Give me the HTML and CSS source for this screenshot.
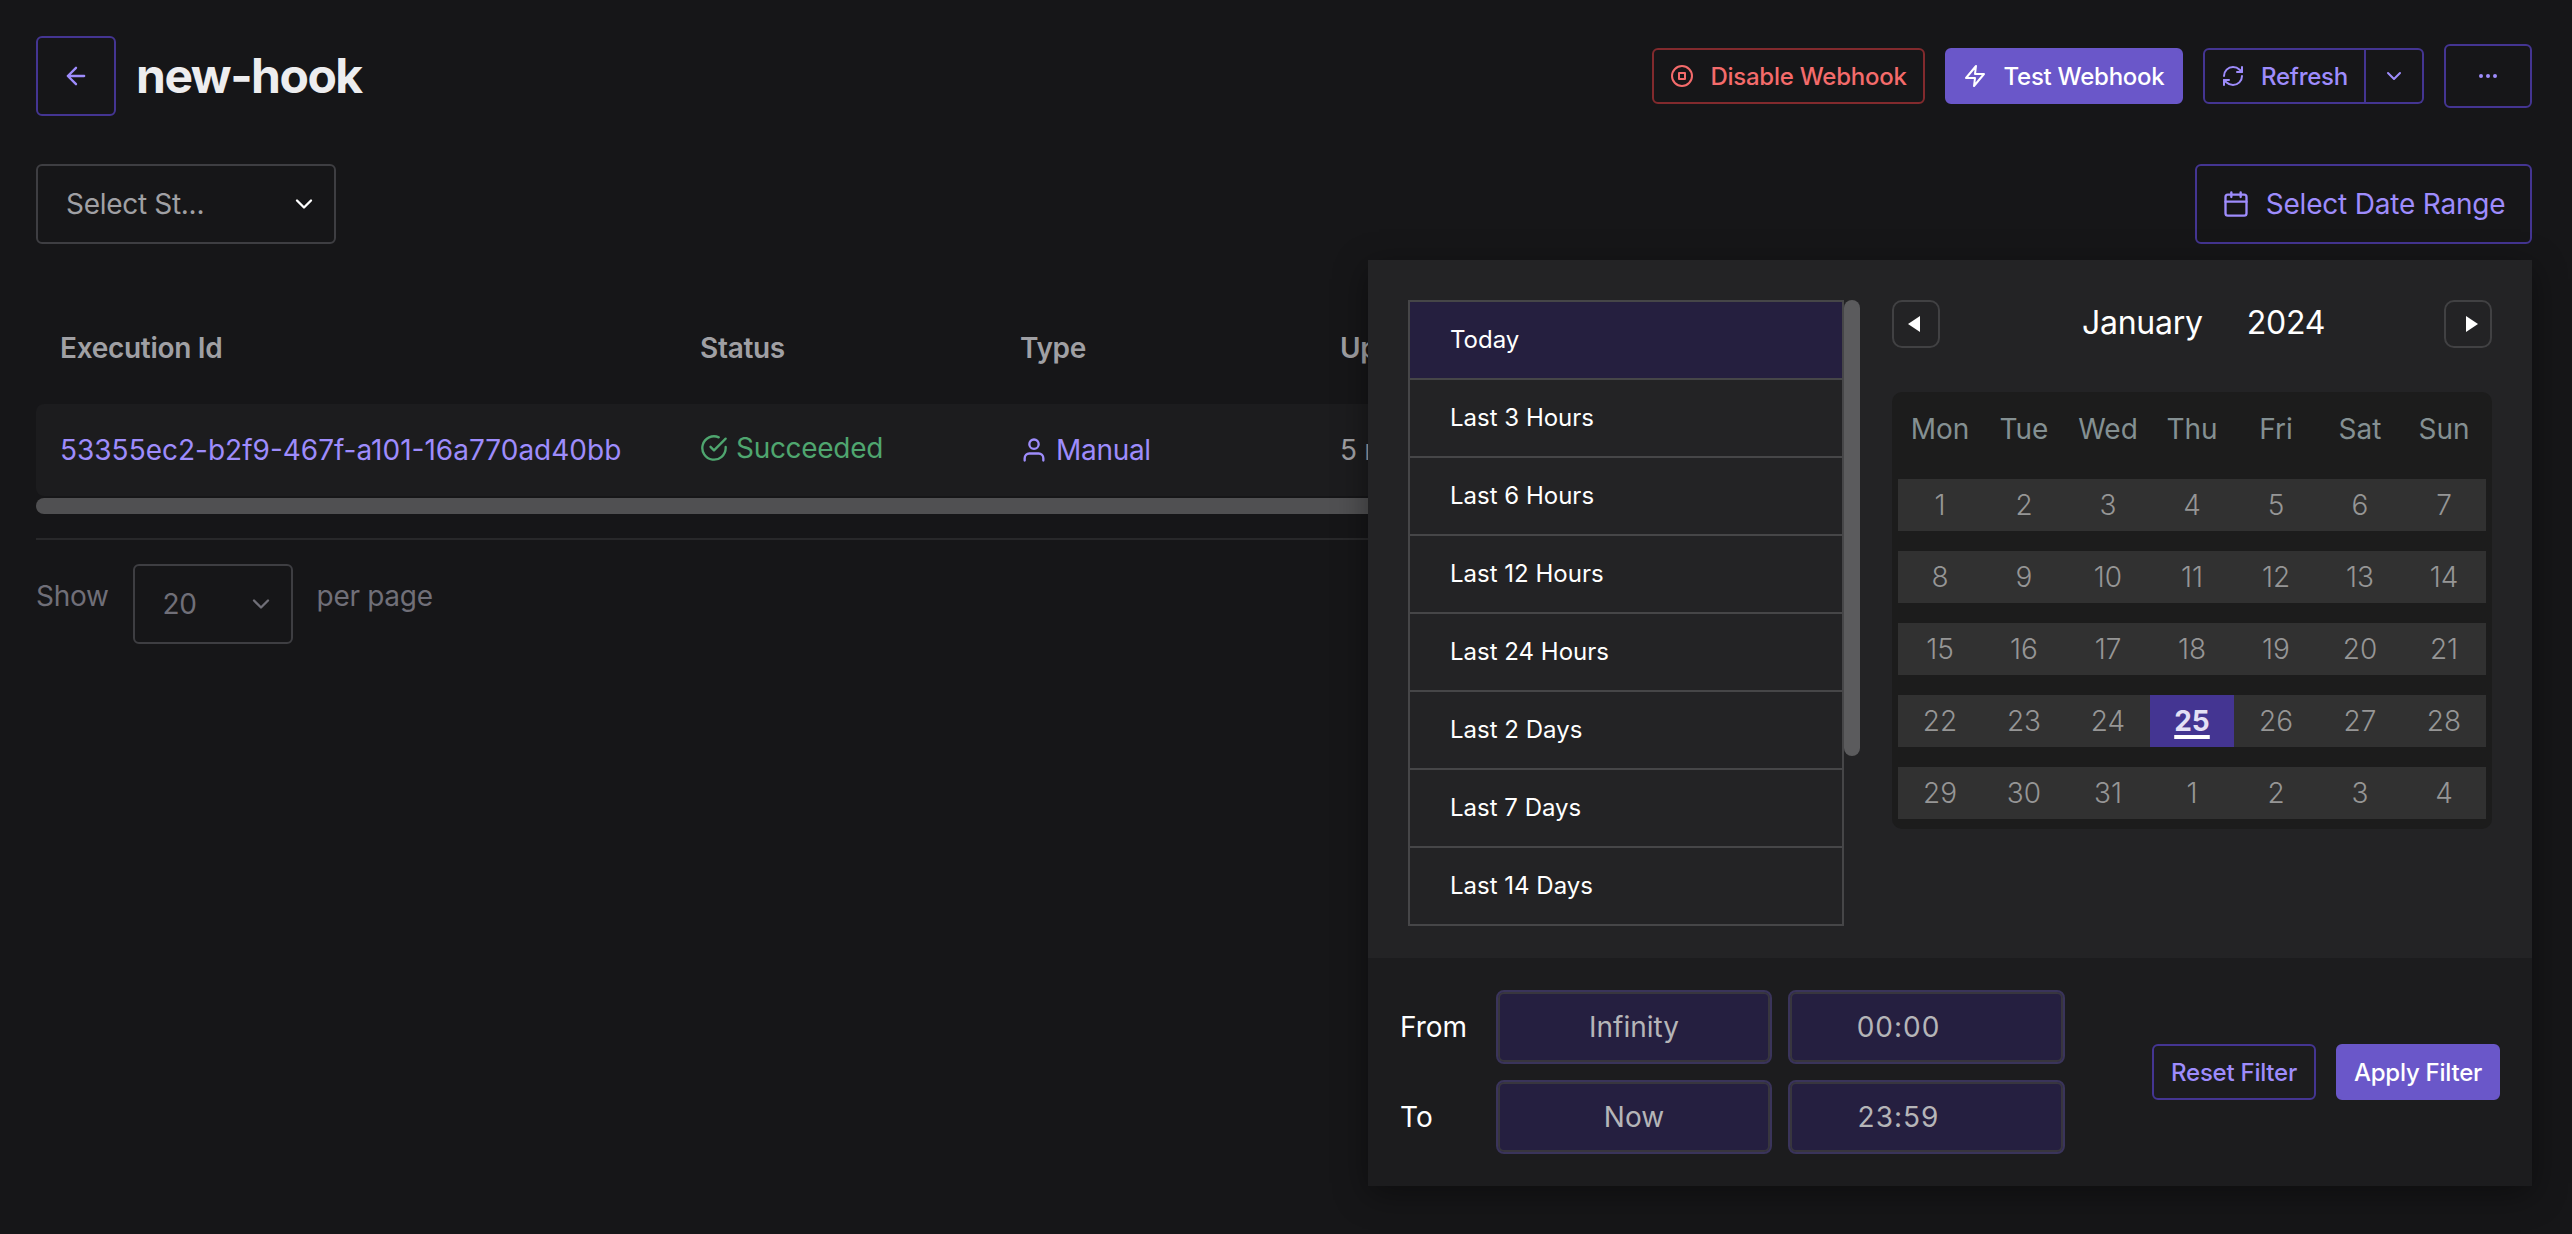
FILE: index.html
```html
<!DOCTYPE html>
<html lang="en">
<head>
    <meta charset="UTF-8">
    <meta name="viewport" content="width=device-width, initial-scale=1.0">
    <title>new-hook</title>
    <link rel="stylesheet" href="styles.css">
</head>
<body>
    <header class="header">
        <button class="btn back">
            <svg class="icon icon-lg" viewBox="0 0 24 24"><path d="M19 12H5M12 19l-7-7 7-7"/></svg>
        </button>
        <h1>new-hook</h1>
        <div class="actions">
            <button class="btn danger">
                <svg class="icon" viewBox="0 0 24 24"><circle cx="12" cy="12" r="10"/><rect x="9" y="9" width="6" height="6"/></svg>
                <span>Disable Webhook</span>
            </button>
            <button class="btn primary">
                <svg class="icon" viewBox="0 0 24 24"><path d="M13 2L3 14h9l-1 8 10-12h-9l1-8z"/></svg>
                <span>Test Webhook</span>
            </button>
            <div class="btn-group">
                <button class="btn">
                    <svg class="icon" viewBox="0 0 24 24"><path d="M21 3v5h-5M3 21v-5h5"/><path d="M3 12a9 9 0 0 1 9-9c2.5 0 4.9 1 6.7 2.7L21 8M21 12a9 9 0 0 1-9 9c-2.5 0-4.9-1-6.7-2.7L3 16"/></svg>
                    <span>Refresh</span>
                </button>
                <button class="btn caret">
                    <svg class="icon" viewBox="0 0 24 24"><path d="M6 9l6 6 6-6"/></svg>
                </button>
            </div>
            <button class="btn more">
                <svg class="icon" viewBox="0 0 24 24"><circle cx="5" cy="12" r="1"/><circle cx="12" cy="12" r="1"/><circle cx="19" cy="12" r="1"/></svg>
            </button>
        </div>
    </header>

    <section class="filters">
        <div class="select status-select">
            <span>Select St...</span>
            <svg class="icon icon-lg" viewBox="0 0 24 24"><path d="M6 9l6 6 6-6"/></svg>
        </div>
        <div class="date-filter">
            <button class="btn date-btn">
                <svg class="icon icon-lg" viewBox="0 0 24 24"><rect x="3" y="4" width="18" height="18" rx="2"/><path d="M16 2v4M8 2v4M3 10h18"/></svg>
                <span>Select Date Range</span>
            </button>

            <div class="popover">
                <div class="popover-main">
                    <div class="ranges">
                        <ul>
                            <li class="active">Today</li>
                            <li>Last 3 Hours</li>
                            <li>Last 6 Hours</li>
                            <li>Last 12 Hours</li>
                            <li>Last 24 Hours</li>
                            <li>Last 2 Days</li>
                            <li>Last 7 Days</li>
                            <li>Last 14 Days</li>
                        </ul>
                        <div class="scroll-y"></div>
                    </div>
                    <div class="calendar">
                        <div class="calendar-nav">
                            <button class="nav-btn prev"><svg viewBox="0 0 12 16"><path d="M12 0v16L0 8z"/></svg></button>
                            <div class="calendar-title"><span>January</span><span>2024</span></div>
                            <button class="nav-btn next"><svg viewBox="0 0 12 16"><path d="M0 0v16l12-8z"/></svg></button>
                        </div>
                        <div class="calendar-body">
                            <div class="weekdays"><span>Mon</span><span>Tue</span><span>Wed</span><span>Thu</span><span>Fri</span><span>Sat</span><span>Sun</span></div>
                            <div class="week"><span>1</span><span>2</span><span>3</span><span>4</span><span>5</span><span>6</span><span>7</span></div>
                            <div class="week"><span>8</span><span>9</span><span>10</span><span>11</span><span>12</span><span>13</span><span>14</span></div>
                            <div class="week"><span>15</span><span>16</span><span>17</span><span>18</span><span>19</span><span>20</span><span>21</span></div>
                            <div class="week"><span>22</span><span>23</span><span>24</span><span class="today">25</span><span>26</span><span>27</span><span>28</span></div>
                            <div class="week"><span>29</span><span>30</span><span>31</span><span>1</span><span>2</span><span>3</span><span>4</span></div>
                        </div>
                    </div>
                </div>
                <div class="popover-footer">
                    <div class="range-inputs">
                        <label>From</label>
                        <div class="field">Infinity</div>
                        <div class="field time">00:00</div>
                        <label>To</label>
                        <div class="field">Now</div>
                        <div class="field time">23:59</div>
                    </div>
                    <div class="footer-actions">
                        <button class="btn">Reset Filter</button>
                        <button class="btn primary">Apply Filter</button>
                    </div>
                </div>
            </div>
        </div>
    </section>

    <section class="executions">
        <div class="row head">
            <div>Execution Id</div>
            <div>Status</div>
            <div>Type</div>
            <div>Updated</div>
        </div>
        <div class="row item">
            <div class="link exec-id">53355ec2-b2f9-467f-a101-16a770ad40bb</div>
            <div class="status">
                <svg class="icon icon-lg" viewBox="0 0 24 24"><path d="M22 11.08V12a10 10 0 1 1-5.93-9.14"/><path d="M22 4L12 14.01l-3-3"/></svg>
                <span>Succeeded</span>
            </div>
            <div class="link type">
                <svg class="icon icon-lg" viewBox="0 0 24 24"><path d="M20 21v-2a4 4 0 0 0-4-4H8a4 4 0 0 0-4 4v2"/><circle cx="12" cy="7" r="4"/></svg>
                <span>Manual</span>
            </div>
            <div>5 minutes ago</div>
        </div>
        <div class="scroll-x"></div>
    </section>

    <footer class="pager">
        <span>Show</span>
        <div class="select page-size">
            <span>20</span>
            <svg class="icon icon-lg" viewBox="0 0 24 24"><path d="M6 9l6 6 6-6"/></svg>
        </div>
        <span>per page</span>
    </footer>
</body>
</html>
```
FILE: styles.css
```css
* {
    box-sizing: border-box;
}
body {
    margin: 0;
    padding: 36px 40px 0 36px;
    height: 100vh;
    overflow: hidden;
    background-color: #161618;
    color: #a0a0a4;
    font-family: Inter, sans-serif;
    font-size: 28px;
    line-height: 40px;
    letter-spacing: -0.3px;
}
h1 {
    margin: 0 auto 0 20px;
    color: #ededef;
    font-size: 48px;
    font-weight: 700;
    line-height: 80px;
    letter-spacing: -1.5px;
}
.icon {
    flex: none;
    width: 24px;
    height: 24px;
    fill: none;
    stroke: currentColor;
    stroke-width: 2;
    stroke-linecap: round;
    stroke-linejoin: round;
}
.icon-lg {
    width: 28px;
    height: 28px;
}

/* buttons */
.btn {
    display: flex;
    align-items: center;
    justify-content: center;
    gap: 16px;
    height: 56px;
    padding: 0 16px;
    border: 2px solid #443592;
    border-radius: 6px;
    background: transparent;
    color: #9e8cfc;
    font-family: inherit;
    font-size: 24px;
    font-weight: 500;
    letter-spacing: -0.25px;
    white-space: nowrap;
}
.btn.primary {
    border-color: #6a57c9;
    background-color: #6a57c9;
    color: #fff;
}
.btn.danger {
    border-color: #822a2d;
    color: #f46b6b;
}
.btn.back {
    width: 80px;
    height: 80px;
    padding: 0;
}
.btn.more {
    width: 88px;
    height: 64px;
}
.btn-group {
    display: flex;
}
.btn-group .btn:first-child {
    width: 163px;
    border-radius: 6px 0 0 6px;
}
.btn-group .caret {
    width: 58px;
    border-left: none;
    border-radius: 0 6px 6px 0;
}
.btn.date-btn {
    width: 337px;
    height: 80px;
    font-size: 28px;
    font-weight: 400;
    letter-spacing: -0.2px;
}

.header {
    display: flex;
    align-items: center;
    height: 80px;
}
.actions {
    display: flex;
    align-items: center;
    gap: 20px;
}
.danger {
    width: 273px;
}
.actions .primary {
    width: 238px;
}

/* filters */
.filters {
    display: flex;
    justify-content: space-between;
    margin-top: 48px;
}
.select {
    display: flex;
    align-items: center;
    justify-content: space-between;
    height: 80px;
    border: 2px solid #3e3e42;
    border-radius: 6px;
}
.status-select {
    width: 300px;
    padding: 0 16px 0 28px;
}
.status-select .icon {
    color: #fff;
}
.date-filter {
    position: relative;
}

/* date popover */
.popover {
    position: absolute;
    top: 96px;
    right: 0;
    width: 1164px;
    background-color: #232325;
    box-shadow: 0 8px 32px rgba(0, 0, 0, 0.4);
    color: #fff;
    letter-spacing: 0;
}
.popover-main {
    display: flex;
    gap: 32px;
    height: 698px;
    padding: 40px;
}
.ranges {
    display: flex;
    align-items: flex-start;
}
.ranges ul {
    width: 436px;
    margin: 0;
    padding: 0;
    list-style: none;
    border: 2px solid #464648;
    border-bottom: none;
}
.ranges li {
    height: 78px;
    padding-left: 40px;
    border-bottom: 2px solid #464648;
    font-size: 24px;
    line-height: 76px;
}
.ranges .active {
    background-color: #251f3f;
}
.scroll-y {
    width: 16px;
    height: 456px;
    border-radius: 8px;
    background-color: #5b5b5d;
}
.calendar {
    width: 600px;
}
.calendar-nav {
    display: flex;
    align-items: center;
    justify-content: space-between;
    height: 48px;
}
.nav-btn {
    display: flex;
    align-items: center;
    width: 48px;
    height: 48px;
    padding: 0 14px;
    border: 2px solid #414143;
    border-radius: 10px;
    background: none;
}
.nav-btn svg {
    width: 12px;
    height: 16px;
    fill: #fff;
}
.nav-btn.next {
    justify-content: flex-end;
    padding: 0 12px;
}
.calendar-title {
    display: flex;
    gap: 44px;
    margin: -2px 0 0 23px;
    font-size: 32px;
    letter-spacing: -0.25px;
}
.calendar-body {
    height: 437px;
    margin-top: 44px;
    padding: 17px 6px 0;
    border-radius: 10px;
    background-color: #1c1c1c;
}
.weekdays,
.week {
    display: grid;
    grid-template-columns: repeat(7, 84px);
    text-align: center;
}
.weekdays {
    margin-bottom: 30px;
    color: #849092;
}
.week {
    height: 52px;
    margin-bottom: 20px;
    background-color: #313131;
    color: #969696;
    font-weight: 300;
    line-height: 52px;
}
.week .today {
    background-color: #443592;
    color: #e4e0f5;
    font-weight: 700;
    text-decoration: underline #fff 4px;
    text-underline-offset: 4px;
}

/* popover footer */
.popover-footer {
    display: flex;
    align-items: center;
    justify-content: space-between;
    height: 228px;
    padding: 0 32px;
    background-color: #1c1c1e;
}
.range-inputs {
    display: grid;
    grid-template-columns: 80px 276px 277px;
    gap: 16px;
    align-items: center;
}
.field {
    height: 74px;
    border: 2px solid #3a345b;
    border-radius: 8px;
    background-color: #251f40;
    box-shadow: inset 0 0 0 2px #38363e;
    color: #b5b5b8;
    line-height: 70px;
    text-align: center;
}
.field.time {
    padding-right: 56px;
    letter-spacing: 1px;
}
.footer-actions {
    display: flex;
    gap: 20px;
}
.footer-actions .btn {
    width: 164px;
}

/* executions table */
.executions {
    padding-bottom: 24px;
    margin-top: 64px;
    border-bottom: 2px solid #28282a;
}
.row {
    display: grid;
    grid-template-columns: 640px 320px 320px auto;
    align-items: center;
    padding: 0 24px;
}
.head {
    height: 80px;
    margin-bottom: 16px;
    font-weight: 600;
}
.item {
    height: 92px;
    border-radius: 8px;
    background-color: #1c1c1e;
}
.link {
    color: #9e8cfc;
}
.exec-id {
    letter-spacing: 0;
}
.status,
.type {
    display: flex;
    align-items: center;
    gap: 8px;
}
.status {
    margin-bottom: 4px;
    color: #4fa66f;
}
.scroll-x {
    height: 16px;
    margin-top: 2px;
    border-radius: 8px;
    background-color: #505052;
}

.pager {
    display: flex;
    align-items: flex-start;
    gap: 24px;
    margin-top: 24px;
    color: #706f78;
}
.pager > span {
    line-height: 64px;
}
.page-size {
    width: 160px;
    padding: 0 16px 0 28px;
}
```
